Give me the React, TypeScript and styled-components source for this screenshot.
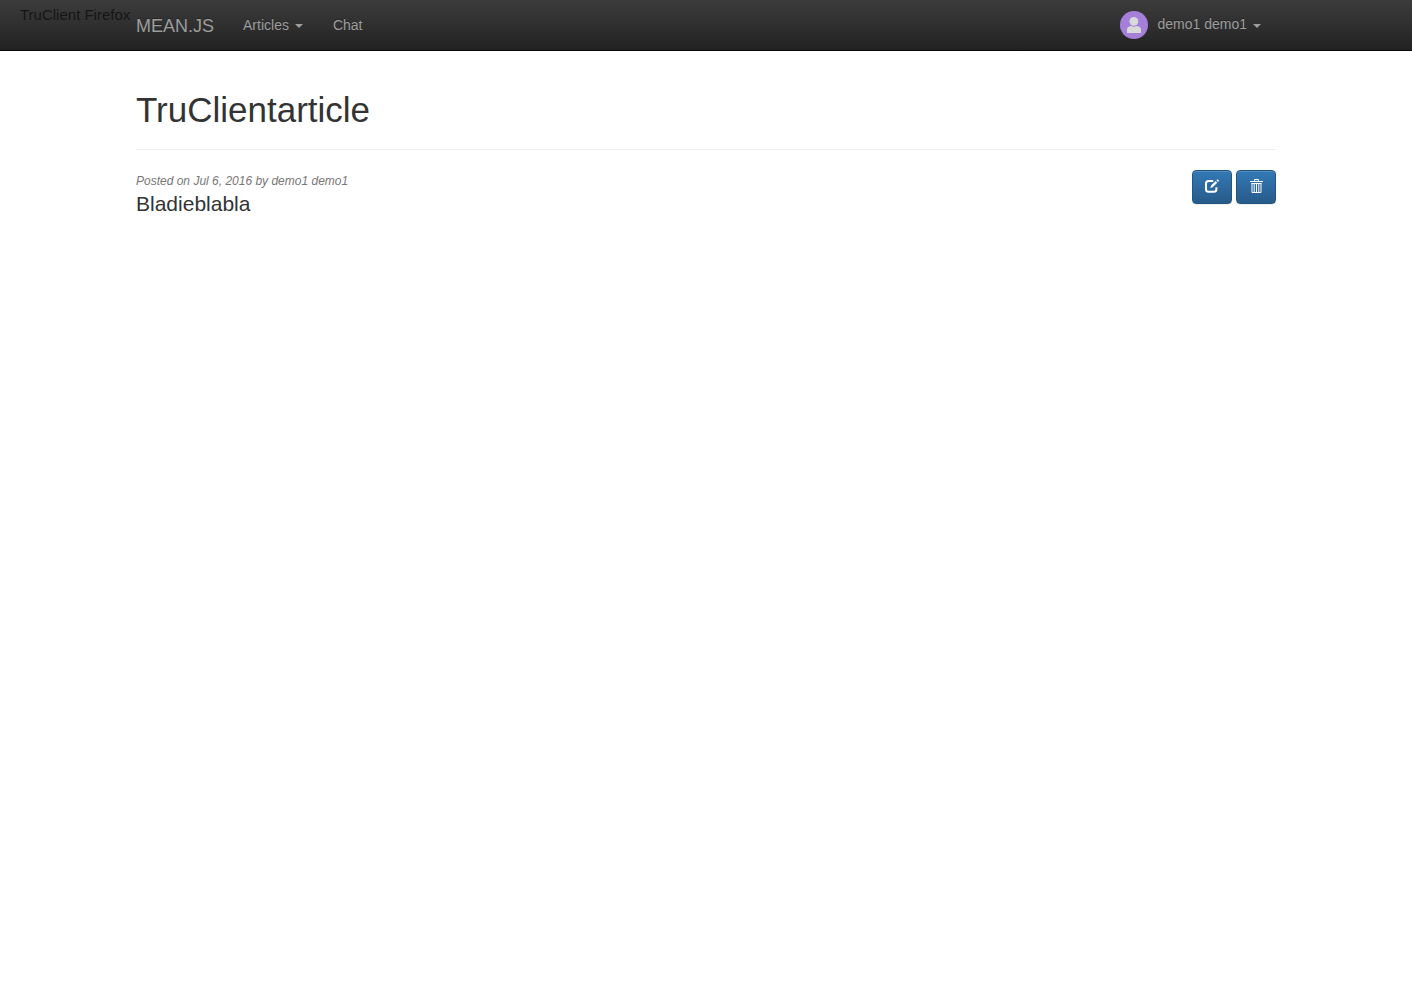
import React from "react";
import styled, { createGlobalStyle } from "styled-components";

const GlobalStyle = createGlobalStyle`
  *, *::before, *::after { box-sizing: border-box; }
  body {
    margin: 0;
    background: #fff;
    color: #333;
    font: 14px/20px "Liberation Sans", Arial, sans-serif;
  }
`;

const Navbar = styled.header`
  position: relative;
  border-bottom: 1px solid #080808;
  background: linear-gradient(to bottom, #3c3c3c 0%, #222 100%);
`;

const Overlay = styled.span`
  position: absolute;
  top: 5px;
  left: 20px;
  font-size: 15px;
  color: #151515;
`;

const Container = styled.div`
  max-width: 1170px;
  margin: 0 auto;
  padding: 0 15px;
`;

const NavRow = styled(Container)`
  display: flex;
  align-items: center;
  min-height: 50px;
`;

const NavLink = styled.a`
  padding: 15px;
  color: #9d9d9d;
  text-decoration: none;
  text-shadow: 0 -1px 0 rgba(0, 0, 0, 0.25);
`;

const Brand = styled(NavLink)`
  padding: 16px 14px 14px 0;
  font-size: 18px;
`;

const NavButton = styled.button`
  display: flex;
  align-items: center;
  padding: 0 15px;
  border: 0;
  background: none;
  color: #9d9d9d;
  font: inherit;
  text-shadow: 0 -1px 0 rgba(0, 0, 0, 0.25);
  cursor: pointer;
`;

const UserButton = styled(NavButton)`
  margin-left: auto;
`;

const UserName = styled.span`
  padding: 0 0 2px 9px;
`;

const Caret = styled.span`
  margin: 2px 0 0 6px;
  border-top: 4px solid currentColor;
  border-right: 4px solid transparent;
  border-left: 4px solid transparent;
`;

const PageHeader = styled.div`
  margin: 39px 0 20px;
  padding-bottom: 20px;
  border-bottom: 1px solid #eee;
`;

const Title = styled.h1`
  margin: 0;
  font-size: 35px;
  font-weight: 400;
  line-height: 39px;
`;

const Article = styled.article`
  display: flex;
  justify-content: space-between;
  align-items: flex-start;
`;

const Byline = styled.em`
  display: block;
  color: #777;
  font-size: 12px;
  line-height: 22px;
`;

const Lead = styled.p`
  margin: 0 0 20px;
  font-size: 21px;
  line-height: 24px;
`;

const Actions = styled.div`
  display: flex;
  gap: 4px;
`;

const ActionButton = styled.button`
  display: flex;
  align-items: center;
  justify-content: center;
  width: 40px;
  height: 34px;
  padding: 0 0 2px;
  border: 1px solid #245580;
  border-radius: 4px;
  background: linear-gradient(to bottom, #337ab7 0%, #265a88 100%);
  background-origin: border-box;
  box-shadow: inset 0 1px 0 rgba(255, 255, 255, 0.15), 0 1px 1px rgba(0, 0, 0, 0.075);
  color: #fff;
  cursor: pointer;
`;

const Avatar = () => (
  <svg width="28" height="28" viewBox="0 0 28 28" aria-hidden="true">
    <circle cx="14" cy="14" r="14" fill="#a57fd8" />
    <circle cx="13.9" cy="10.3" r="4.4" fill="#d9d9d9" />
    <path d="M7 22v-3.5Q7 16 9.4 15.4l1.8-.4q2.7 1.4 5.6 0l1.8.4Q21 16 21 18.5V22z" fill="#d9d9d9" />
  </svg>
);

const EditIcon = () => (
  <svg width="14" height="14" viewBox="0 0 14 14" fill="none" aria-hidden="true">
    <path d="M8.2 2H3.6Q1 2 1 4.6v5.6q0 2.6 2.6 2.6h5.2q2.6 0 2.6-2.6V8.2" stroke="#fff" strokeWidth="2" />
    <path d="M5.3 9.2l.8-2.6 4.5-4.5 1.6 1.6-4.5 4.5zM11.4 1.3l.9-.9q.3-.3.6 0l1 1q.3.3 0 .6l-.9.9z" fill="#fff" />
  </svg>
);

const TrashIcon = () => (
  <svg width="14" height="14" viewBox="0 0 14 14" fill="none" stroke="#fff" aria-hidden="true">
    <path d="M5.5 1.8V.5h4v1.3M1 2.5h13" />
    <path d="M2.5 4.5h10M3 4v9.5h9V4M5.2 5v8M7.5 5v8M9.8 5v8" />
  </svg>
);

export default function App() {
  return (
    <>
      <GlobalStyle />
      <Navbar>
        <Overlay>TruClient Firefox</Overlay>
        <NavRow as="nav">
          <Brand href="#">MEAN.JS</Brand>
          <NavButton type="button" aria-haspopup="menu">
            Articles
            <Caret />
          </NavButton>
          <NavLink href="#chat">Chat</NavLink>
          <UserButton type="button" aria-haspopup="menu">
            <Avatar />
            <UserName>demo1 demo1</UserName>
            <Caret />
          </UserButton>
        </NavRow>
      </Navbar>
      <Container as="main">
        <PageHeader>
          <Title>TruClientarticle</Title>
        </PageHeader>
        <Article>
          <div>
            <Byline>Posted on Jul 6, 2016 by demo1 demo1</Byline>
            <Lead>Bladieblabla</Lead>
          </div>
          <Actions>
            <ActionButton type="button" aria-label="Edit article">
              <EditIcon />
            </ActionButton>
            <ActionButton type="button" aria-label="Delete article">
              <TrashIcon />
            </ActionButton>
          </Actions>
        </Article>
      </Container>
    </>
  );
}
